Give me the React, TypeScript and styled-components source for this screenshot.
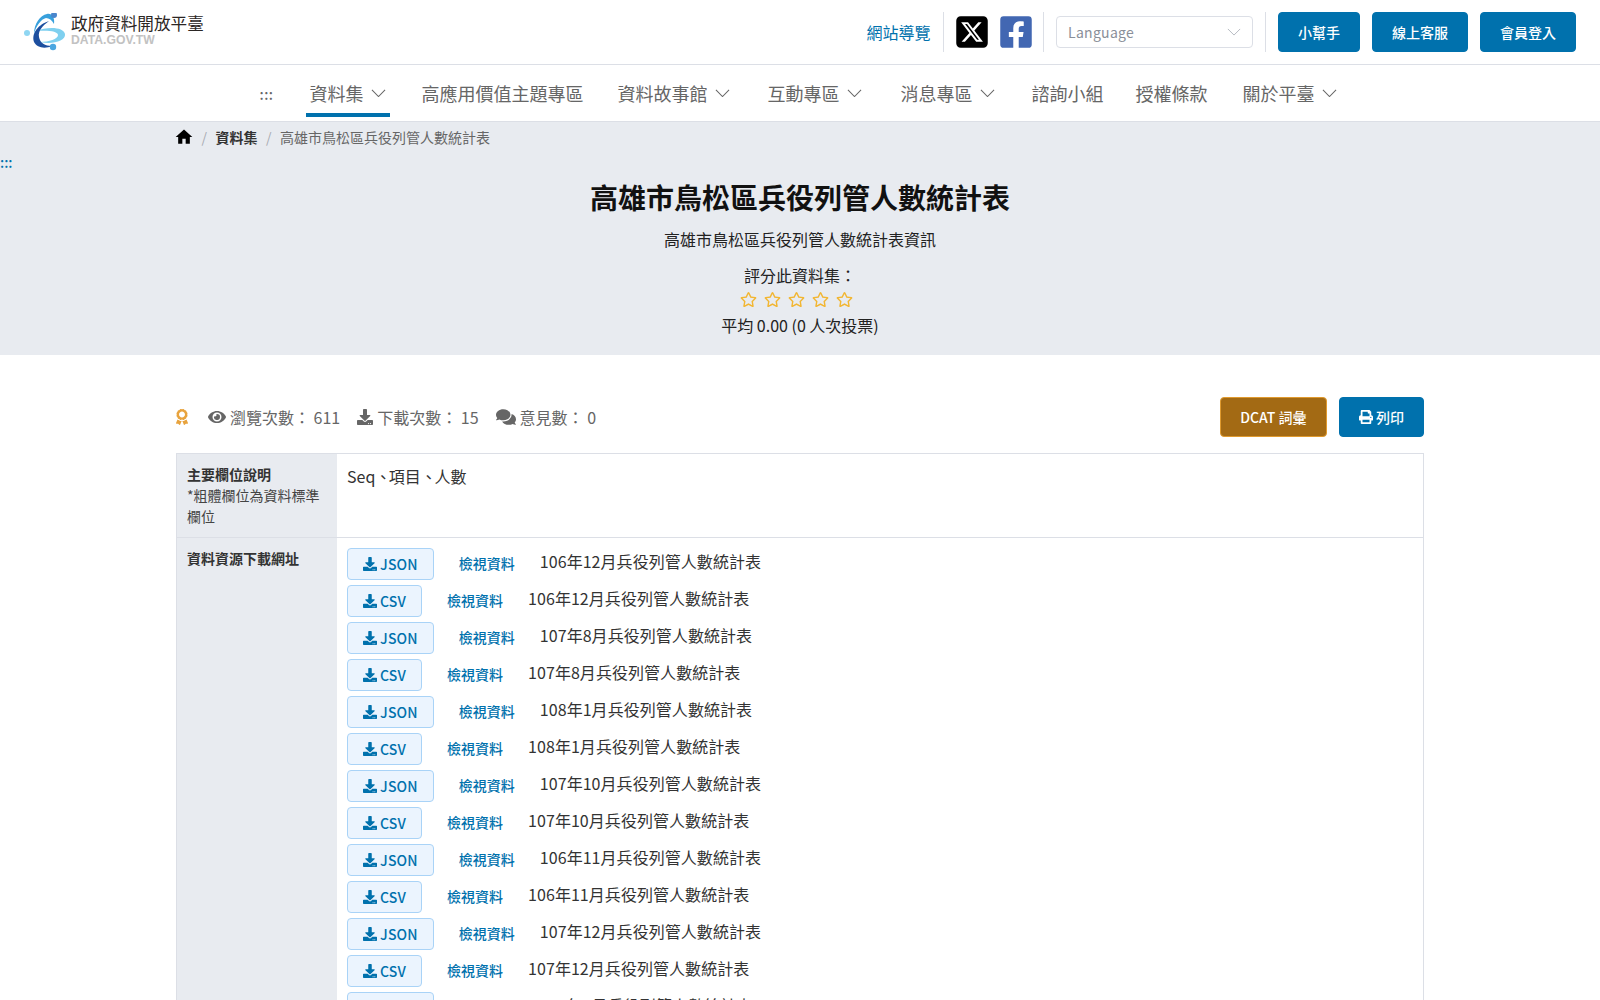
import styled, { createGlobalStyle } from 'styled-components'
import {
  FaAward,
  FaComments,
  FaDownload,
  FaEye,
  FaFacebookSquare,
  FaPrint,
  FaRegStar,
} from 'react-icons/fa'
import { FaSquareXTwitter } from 'react-icons/fa6'
import { MdHome } from 'react-icons/md'

const Color = {
  primary: '#0071ad',
  banner: '#e8ebf0',
  line: '#dcdfe6',
  text: '#333333',
  muted: '#666666',
}

const GlobalStyle = createGlobalStyle`
  html {
    scrollbar-width: none;
  }
  body {
    margin: 0;
    background: #fff;
    color: ${Color.text};
    font-family: "Noto Sans CJK TC", "Noto Sans", sans-serif;
    font-size: 16px;
  }
  a {
    text-decoration: none;
    color: inherit;
  }
`

const TopBar = styled.header`
  height: 64px;
  padding: 0 24px;
  display: flex;
  align-items: center;
  justify-content: space-between;
  border-bottom: 1px solid ${Color.line};
`

const LogoLink = styled.a`
  display: flex;
  align-items: center;
  gap: 5px;
`

const LogoText = styled.div`
  display: flex;
  flex-direction: column;
  padding-bottom: 3px;
`

const LogoTitle = styled.span`
  font-size: 16.6px;
  line-height: 18px;
  font-weight: 400;
  color: #2b2624;
  white-space: nowrap;
`

const LogoSub = styled.span`
  font-family: "Liberation Sans", sans-serif;
  font-size: 12.2px;
  line-height: 15px;
  margin-top: 1px;
  font-weight: 700;
  color: #c2c2c2;
`

const TopActions = styled.div`
  display: flex;
  align-items: center;
`

const SiteMapLink = styled.a`
  color: ${Color.primary};
  font-size: 16px;
  margin-right: 12px;
`

const Divider = styled.span`
  width: 1px;
  height: 40px;
  background: ${Color.line};
`

const Socials = styled.div`
  display: flex;
  align-items: center;
  gap: 8px;
  padding: 0 9.5px 0 10px;
  line-height: 0;
`

const LanguageBox = styled.div`
  width: 197px;
  height: 32px;
  box-sizing: border-box;
  margin: 0 12px;
  padding: 0 11px;
  border: 1px solid ${Color.line};
  border-radius: 4px;
  display: flex;
  align-items: center;
  justify-content: space-between;
  font-size: 14px;
  letter-spacing: 0.3px;
  color: #8a8f99;
`

const SolidButton = styled.button<{ $bg?: string; $border?: string }>`
  height: 40px;
  box-sizing: border-box;
  padding: 0 19px;
  border: 1px solid ${(props) => props.$border || props.$bg || Color.primary};
  border-radius: 4px;
  background: ${(props) => props.$bg || Color.primary};
  color: #fff;
  font-family: inherit;
  font-size: 14px;
  font-weight: 500;
  display: inline-flex;
  align-items: center;
  gap: 3px;
  white-space: nowrap;
`

const DcatButton = styled(SolidButton)`
  padding: 0 19.5px;
`

const TopButtons = styled.div`
  display: flex;
  gap: 12px;
  margin-left: 12px;
`

const NavBar = styled.nav`
  height: 56px;
  border-bottom: 1px solid ${Color.line};
  display: flex;
  justify-content: center;
  align-items: stretch;
  font-size: 18px;
  color: #666;
`

const NavMark = styled.span`
  font-size: 14px;
  font-weight: 500;
  letter-spacing: 0.5px;
  align-self: center;
  margin: 2px 32px 0 0;
  color: #666;
`

const NavItem = styled.a<{ $active?: boolean; $gap: number }>`
  position: relative;
  display: flex;
  align-items: center;
  gap: 7px;
  padding: 0 4px;
  margin-right: ${(props) => props.$gap}px;
  ${(props) =>
    props.$active &&
    `&::after {
      content: '';
      position: absolute;
      left: 0;
      right: 0;
      bottom: 4px;
      height: 4px;
      background: ${Color.primary};
    }`}
`

const Banner = styled.section`
  background: ${Color.banner};
  height: 233px;
  position: relative;
  text-align: center;
`

const Breadcrumb = styled.ol`
  width: 1248px;
  margin: 0 auto;
  padding: 5px 0 0;
  list-style: none;
  display: flex;
  align-items: center;
  font-size: 14px;
  line-height: 20px;
  color: #666;
`

const CrumbSlash = styled.span`
  margin: 0 8.5px;
  color: #a8acb3;
`

const CrumbStrong = styled.li`
  font-weight: 700;
  color: #333;
`

const HomeCrumb = styled.li`
  color: #000;
  line-height: 0;
  margin: 0 -1px 0 -2px;
`

const AnchorMark = styled.a`
  position: absolute;
  left: 0;
  top: 30px;
  font-size: 14px;
  font-weight: 500;
  line-height: 20px;
  color: ${Color.primary};
`

const Title = styled.h1`
  margin: 29px 0 0;
  font-size: 28px;
  line-height: 42px;
  font-weight: 700;
  color: #111;
`

const Subtitle = styled.p`
  margin: 9px 0 0;
  font-size: 16px;
  line-height: 24px;
  color: #222;
`

const RateLabel = styled.div`
  margin-top: 12px;
  font-size: 16px;
  line-height: 24px;
  color: #222;
`

const Stars = styled.div`
  display: flex;
  justify-content: center;
  gap: 7px;
  height: 24px;
  align-items: center;
  color: #f2b632;
  padding-right: 7px;
`

const RateAverage = styled.div`
  font-size: 16px;
  line-height: 24px;
  margin-top: 2px;
  color: #222;
`

const Content = styled.main`
  width: 1248px;
  margin: 0 auto;
`

const StatsRow = styled.div`
  display: flex;
  align-items: center;
  justify-content: space-between;
  padding-top: 42px;
  padding-bottom: 16px;
`

const Stats = styled.div`
  display: flex;
  align-items: center;
  color: ${Color.muted};
  font-size: 16px;
`

const Stat = styled.span`
  display: inline-flex;
  align-items: center;
  gap: 4px;
  margin-right: 17px;
  white-space: nowrap;
`

const AwardMark = styled.span`
  color: #e8a33d;
  line-height: 0;
  margin: 0 18px 0 -2px;
`

const StatButtons = styled.div`
  display: flex;
  gap: 12px;
`

const InfoTable = styled.div`
  border: 1px solid ${Color.line};
  border-bottom: 0;
`

const InfoRow = styled.div`
  display: grid;
  grid-template-columns: 160px 1fr;
  & + & {
    border-top: 1px solid ${Color.line};
  }
`

const InfoLabel = styled.div`
  background: ${Color.banner};
  padding: 10px;
  font-size: 14px;
  line-height: 21px;
  color: #444;
`

const LabelStrong = styled.div`
  font-weight: 700;
  color: #333;
`

const InfoValue = styled.div`
  padding: 10px;
  line-height: 24px;
  color: #333;
`

const FieldComma = styled.span`
  letter-spacing: -2.5px;
`

const ResourceRow = styled.div`
  display: flex;
  align-items: center;
  height: 32px;
  margin-bottom: 5px;
`

const DownloadButton = styled.a`
  height: 32px;
  box-sizing: border-box;
  padding: 0 15px;
  border: 1px solid #a9d3f7;
  border-radius: 4px;
  background: #ebf4fe;
  color: ${Color.primary};
  display: inline-flex;
  align-items: center;
  gap: 3px;
  font-size: 14px;
  font-weight: 500;
  letter-spacing: 0.2px;
`

const ViewLink = styled.a`
  margin-left: 25px;
  font-size: 14px;
  font-weight: 500;
  color: ${Color.primary};
  padding-bottom: 2px;
`

const ResourceTitle = styled.span`
  margin-left: 25px;
  font-size: 16px;
  letter-spacing: 0.05px;
  color: #333;
  padding-bottom: 7px;
`

const navItems = [
  { label: '資料集', caret: true, active: true, gap: 28 },
  { label: '高應用價值主題專區', gap: 26 },
  { label: '資料故事館', caret: true, gap: 30 },
  { label: '互動專區', caret: true, gap: 31 },
  { label: '消息專區', caret: true, gap: 29 },
  { label: '諮詢小組', gap: 24 },
  { label: '授權條款', gap: 27 },
  { label: '關於平臺', caret: true, gap: 0 },
]

const periods = [
  '106年12月',
  '107年8月',
  '108年1月',
  '107年10月',
  '106年11月',
  '107年12月',
  '108年8月',
  '108年10月',
]

const Chevron = ({ width = 15, color = 'currentColor' }: { width?: number; color?: string }) => (
  <svg width={width} height={width / 2 + 1} viewBox="0 0 16 9" fill="none">
    <path d="M1 1l7 7 7-7" stroke={color} strokeWidth="1.1" />
  </svg>
)

const Logo = () => (
  <svg width="42" height="38" viewBox="24 13 42 38">
    <path d="M36 31C48 26 64 27 65 34C66 41 52 45 40 42C49 42 58 39 58 35C58 31 48 30 36 31z" fill="#7fd0ef" />
    <path d="M49 21C39 24 31 33 34 42C37 48 45 49 52 46C45 46 40 43 39 37C38 31 42 26 49 21z" fill="#1d4f9f" />
    <path d="M34 34C34 24 40 15 47 14C52 13 55 18 54 24C52 20 49 18 46 18C41 19 36 26 34 34z" fill="#38a0dc" />
    <circle cx="54" cy="15" r="3" fill="#4a86cc" />
    <circle cx="27" cy="33" r="3" fill="#8fd6f2" />
    <circle cx="53" cy="47" r="3.2" fill="#4aa6e0" />
  </svg>
)

const App = () => {
  const resources = periods.flatMap((period) => [
    { format: 'JSON', period },
    { format: 'CSV', period },
  ])

  return (
    <div lang="zh-Hant">
      <GlobalStyle />
      <TopBar>
        <LogoLink href="#">
          <Logo />
          <LogoText>
            <LogoTitle>政府資料開放平臺</LogoTitle>
            <LogoSub>DATA.GOV.TW</LogoSub>
          </LogoText>
        </LogoLink>
        <TopActions>
          <SiteMapLink href="#">網站導覽</SiteMapLink>
          <Divider />
          <Socials>
            <FaSquareXTwitter size={36} color="#000" />
            <FaFacebookSquare size={36} color="#4267b2" />
          </Socials>
          <Divider />
          <LanguageBox>
            Language
            <Chevron width={14} color="#b4b8c0" />
          </LanguageBox>
          <Divider />
          <TopButtons>
            <SolidButton>小幫手</SolidButton>
            <SolidButton>線上客服</SolidButton>
            <SolidButton>會員登入</SolidButton>
          </TopButtons>
        </TopActions>
      </TopBar>
      <NavBar>
        <NavMark>:::</NavMark>
        {navItems.map((item) => (
          <NavItem key={item.label} href="#" $active={item.active} $gap={item.gap}>
            {item.label}
            {item.caret && <Chevron />}
          </NavItem>
        ))}
      </NavBar>
      <Banner>
        <Breadcrumb>
          <HomeCrumb>
            <MdHome size={20} />
          </HomeCrumb>
          <CrumbSlash>/</CrumbSlash>
          <CrumbStrong>資料集</CrumbStrong>
          <CrumbSlash>/</CrumbSlash>
          <li>高雄市鳥松區兵役列管人數統計表</li>
        </Breadcrumb>
        <AnchorMark href="#">:::</AnchorMark>
        <Title>高雄市鳥松區兵役列管人數統計表</Title>
        <Subtitle>高雄市鳥松區兵役列管人數統計表資訊</Subtitle>
        <RateLabel>評分此資料集：</RateLabel>
        <Stars>
          {[1, 2, 3, 4, 5].map((n) => (
            <FaRegStar key={n} size={17} />
          ))}
        </Stars>
        <RateAverage>平均 0.00 (0 人次投票)</RateAverage>
      </Banner>
      <Content>
        <StatsRow>
          <Stats>
            <AwardMark>
              <FaAward size={16} />
            </AwardMark>
            <Stat>
              <FaEye size={18} />
              瀏覽次數： 611
            </Stat>
            <Stat>
              <FaDownload size={16} />
              下載次數： 15
            </Stat>
            <Stat>
              <FaComments size={20} />
              意見數： 0
            </Stat>
          </Stats>
          <StatButtons>
            <DcatButton $bg="#a36a14" $border="#e09a2e">
              DCAT 詞彙
            </DcatButton>
            <SolidButton>
              <FaPrint size={14} />
              列印
            </SolidButton>
          </StatButtons>
        </StatsRow>
        <InfoTable>
          <InfoRow>
            <InfoLabel>
              <LabelStrong>主要欄位說明</LabelStrong>
              *粗體欄位為資料標準欄位
            </InfoLabel>
            <InfoValue>
              Seq<FieldComma>、</FieldComma>項目<FieldComma>、</FieldComma>人數
            </InfoValue>
          </InfoRow>
          <InfoRow>
            <InfoLabel>
              <LabelStrong>資料資源下載網址</LabelStrong>
            </InfoLabel>
            <InfoValue>
              {resources.map((res) => (
                <ResourceRow key={res.period + res.format}>
                  <DownloadButton href="#">
                    <FaDownload size={14} />
                    {res.format}
                  </DownloadButton>
                  <ViewLink href="#">檢視資料</ViewLink>
                  <ResourceTitle>{res.period}兵役列管人數統計表</ResourceTitle>
                </ResourceRow>
              ))}
            </InfoValue>
          </InfoRow>
        </InfoTable>
      </Content>
    </div>
  )
}

export default App
